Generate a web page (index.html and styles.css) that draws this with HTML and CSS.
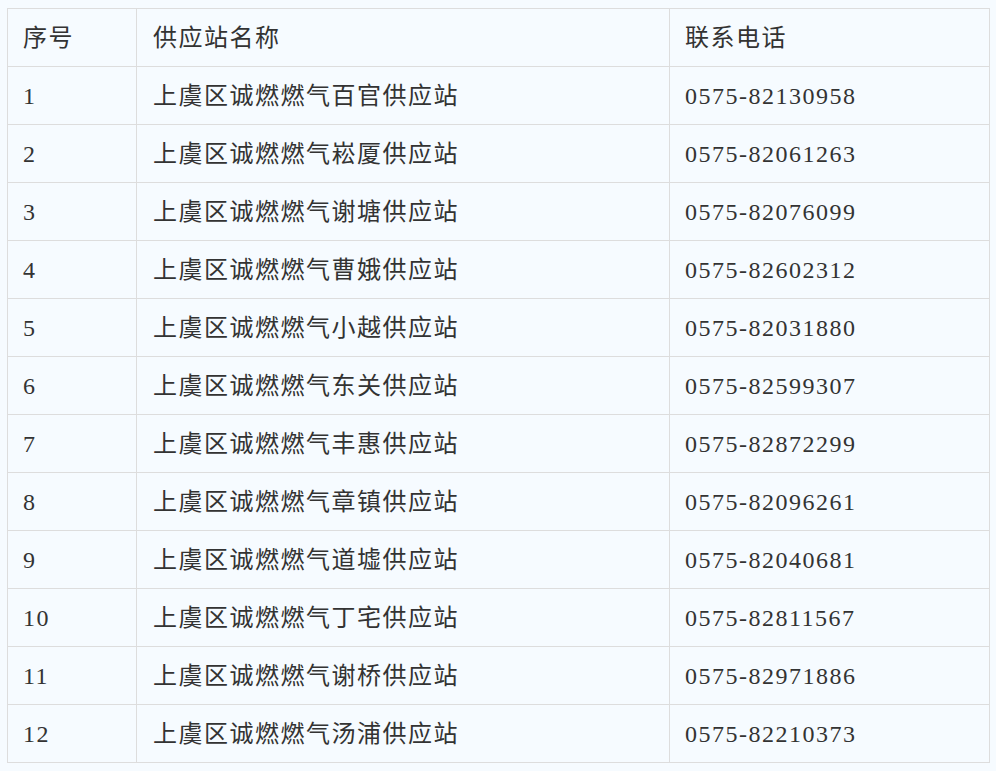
FILE: index.html
```html
<!DOCTYPE html>
<html lang="zh-CN">
	<head>
		<meta charset="utf-8">
		<title>供应站列表</title>
		<link rel="stylesheet" href="styles.css">
	</head>
	<body>
		<table class="stations">
			<thead>
				<tr>
					<th class="num">序号</th>
					<th class="name">供应站名称</th>
					<th class="phone">联系电话</th>
				</tr>
			</thead>
			<tbody>
				<tr><td class="num">1</td><td class="name">上虞区诚燃燃气百官供应站</td><td class="phone">0575-82130958</td></tr>
				<tr><td class="num">2</td><td class="name">上虞区诚燃燃气崧厦供应站</td><td class="phone">0575-82061263</td></tr>
				<tr><td class="num">3</td><td class="name">上虞区诚燃燃气谢塘供应站</td><td class="phone">0575-82076099</td></tr>
				<tr><td class="num">4</td><td class="name">上虞区诚燃燃气曹娥供应站</td><td class="phone">0575-82602312</td></tr>
				<tr><td class="num">5</td><td class="name">上虞区诚燃燃气小越供应站</td><td class="phone">0575-82031880</td></tr>
				<tr><td class="num">6</td><td class="name">上虞区诚燃燃气东关供应站</td><td class="phone">0575-82599307</td></tr>
				<tr><td class="num">7</td><td class="name">上虞区诚燃燃气丰惠供应站</td><td class="phone">0575-82872299</td></tr>
				<tr><td class="num">8</td><td class="name">上虞区诚燃燃气章镇供应站</td><td class="phone">0575-82096261</td></tr>
				<tr><td class="num">9</td><td class="name">上虞区诚燃燃气道墟供应站</td><td class="phone">0575-82040681</td></tr>
				<tr><td class="num">10</td><td class="name">上虞区诚燃燃气丁宅供应站</td><td class="phone">0575-82811567</td></tr>
				<tr><td class="num">11</td><td class="name">上虞区诚燃燃气谢桥供应站</td><td class="phone">0575-82971886</td></tr>
				<tr><td class="num">12</td><td class="name">上虞区诚燃燃气汤浦供应站</td><td class="phone">0575-82210373</td></tr>
			</tbody>
		</table>
	</body>
</html>
```

FILE: styles.css
```css
html, body
{
	background-color: #f6fbff;
}
body
{
	margin: 8px 0 0 7px;
	font-family: "Liberation Serif", "Noto Sans CJK SC", serif;
	font-size: 24px;
	letter-spacing: 1.5px;
	color: #333333;
}
table.stations
{
	border-spacing: 0px;
	border-top: 1px solid #dddddd;
	border-left: 1px solid #dddddd;
	width: 983px;
	table-layout: fixed;
}
th, td
{
	border-right: 1px solid #dddddd;
	border-bottom: 1px solid #dddddd;
	height: 58px;
	padding: 1px 15px 0px 15px;
	box-sizing: border-box;
	text-align: left;
	font-weight: normal;
	vertical-align: middle;
	line-height: 30px;
}
th.num, td.num
{
	width: 129px;
}
th.name, td.name
{
	width: 533px;
	padding-left: 16px;
}
```
